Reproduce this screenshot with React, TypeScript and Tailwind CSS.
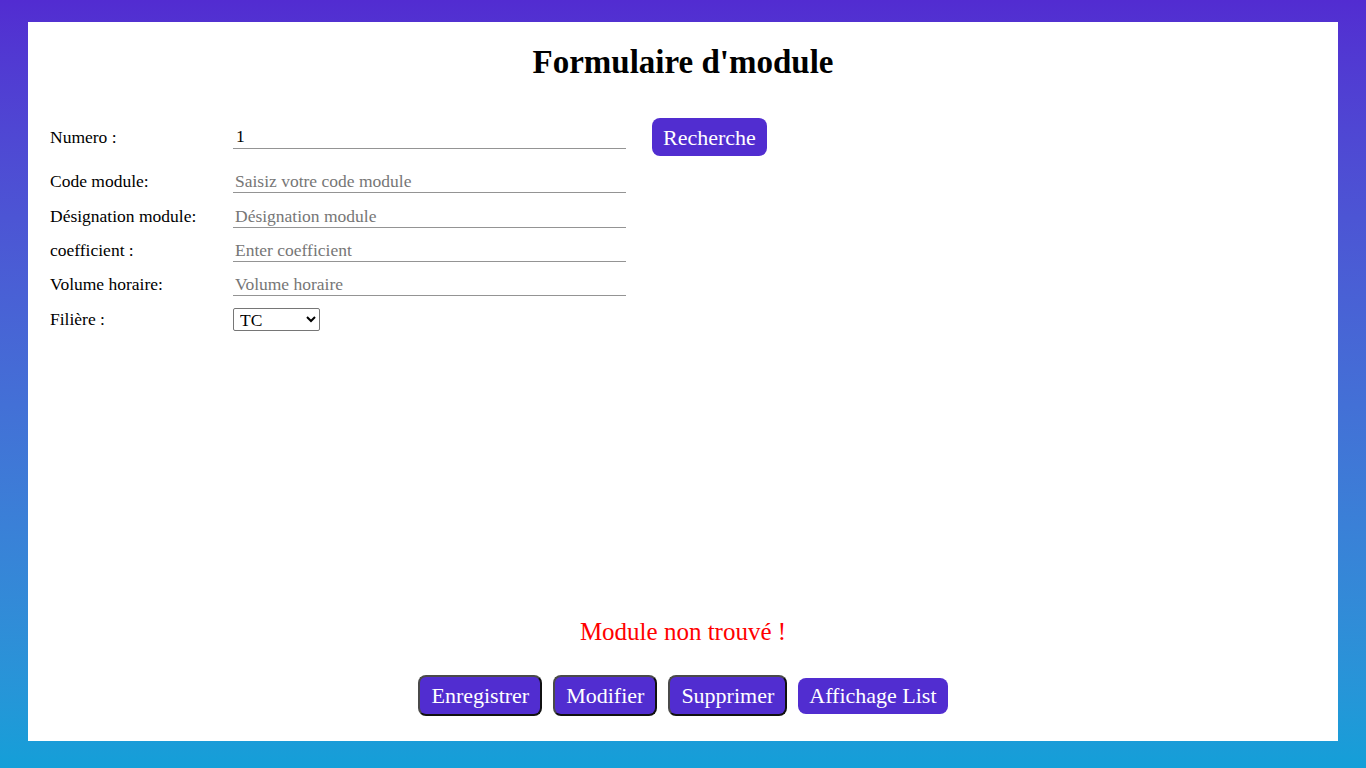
import { useState } from "react"

const fields = [
  { label: "Code module:", placeholder: "Saisiz votre code module", mt: "mt-0" },
  { label: "Désignation module:", placeholder: "Désignation module", mt: "mt-[12px]" },
  { label: "coefficient :", placeholder: "Enter coefficient", mt: "mt-[11px]" },
  { label: "Volume horaire:", placeholder: "Volume horaire", mt: "mt-[11px]" },
]

const actions = [
  { label: "Enregistrer", bordered: true },
  { label: "Modifier", bordered: true },
  { label: "Supprimer", bordered: true },
  { label: "Affichage List", bordered: false },
]

export default function App() {
  const [numero, setNumero] = useState("1")

  return (
    <div
      className="flex min-h-screen flex-col bg-gradient-to-b from-[#522cd1] to-[#139fd8] px-[28px] pt-[22px] pb-[27px]"
      style={{ fontFamily: '"Liberation Serif", "Times New Roman", serif' }}
    >
      <div className="flex flex-1 flex-col bg-white px-[22px] pt-[22px] pb-[25px] text-black">
        <h1 className="text-center text-[33px] font-bold leading-[37px]">Formulaire d'module</h1>

        <form className="mt-[37px] flex flex-col" onSubmit={(e) => e.preventDefault()}>
          <div className="flex h-[38px] items-center">
            <label className="w-[183px] shrink-0 text-[17.5px]">Numero :</label>
            <input
              value={numero}
              onChange={(e) => setNumero(e.target.value)}
              className="h-[23px] w-[393px] border-b border-[#949494] px-[3px] text-[17.5px] outline-none"
            />
            <button
              type="button"
              className="ml-[26px] h-[38px] rounded-[8px] bg-[#512dd0] px-[11px] text-[22px] text-white"
            >
              Recherche
            </button>
          </div>

          <div className="mt-[14px] flex flex-col">
            {fields.map((f) => (
              <div key={f.label} className={`flex h-[23px] items-center ${f.mt}`}>
                <label className="w-[183px] shrink-0 text-[17.5px]">{f.label}</label>
                <input
                  placeholder={f.placeholder}
                  className="h-[23px] w-[393px] border-b border-[#949494] px-[2px] text-[17.5px] outline-none placeholder:text-[#767676]"
                />
              </div>
            ))}
            <div className="mt-[12px] flex h-[23px] items-center">
              <label className="w-[183px] shrink-0 text-[17.5px]">Filière :</label>
              <select className="h-[23px] w-[87px] rounded-[2px] border border-[#767676] bg-white px-[2px] text-[17.5px] leading-[20px]">
                <option>TC</option>
                <option>DI</option>
                <option>GE</option>
              </select>
            </div>
          </div>
        </form>

        <div className="flex-1" />

        <p className="text-center text-[25px] leading-[28px] text-[#ff0000]">Module non trouvé !</p>

        <div className="mt-[29px] flex items-center justify-center gap-[11px]">
          {actions.map((a) =>
            a.bordered ? (
              <button
                key={a.label}
                type="button"
                className="h-[41px] rounded-[8px] border-2 border-t-[#4a4a4a] border-l-[#4a4a4a] border-r-[#111] border-b-[#111] bg-[#512dd0] px-[11px] text-[22px] text-white"
              >
                {a.label}
              </button>
            ) : (
              <button
                key={a.label}
                type="button"
                className="h-[36px] rounded-[8px] bg-[#512dd0] px-[11px] text-[22px] text-white"
              >
                {a.label}
              </button>
            )
          )}
        </div>
      </div>
    </div>
  )
}
